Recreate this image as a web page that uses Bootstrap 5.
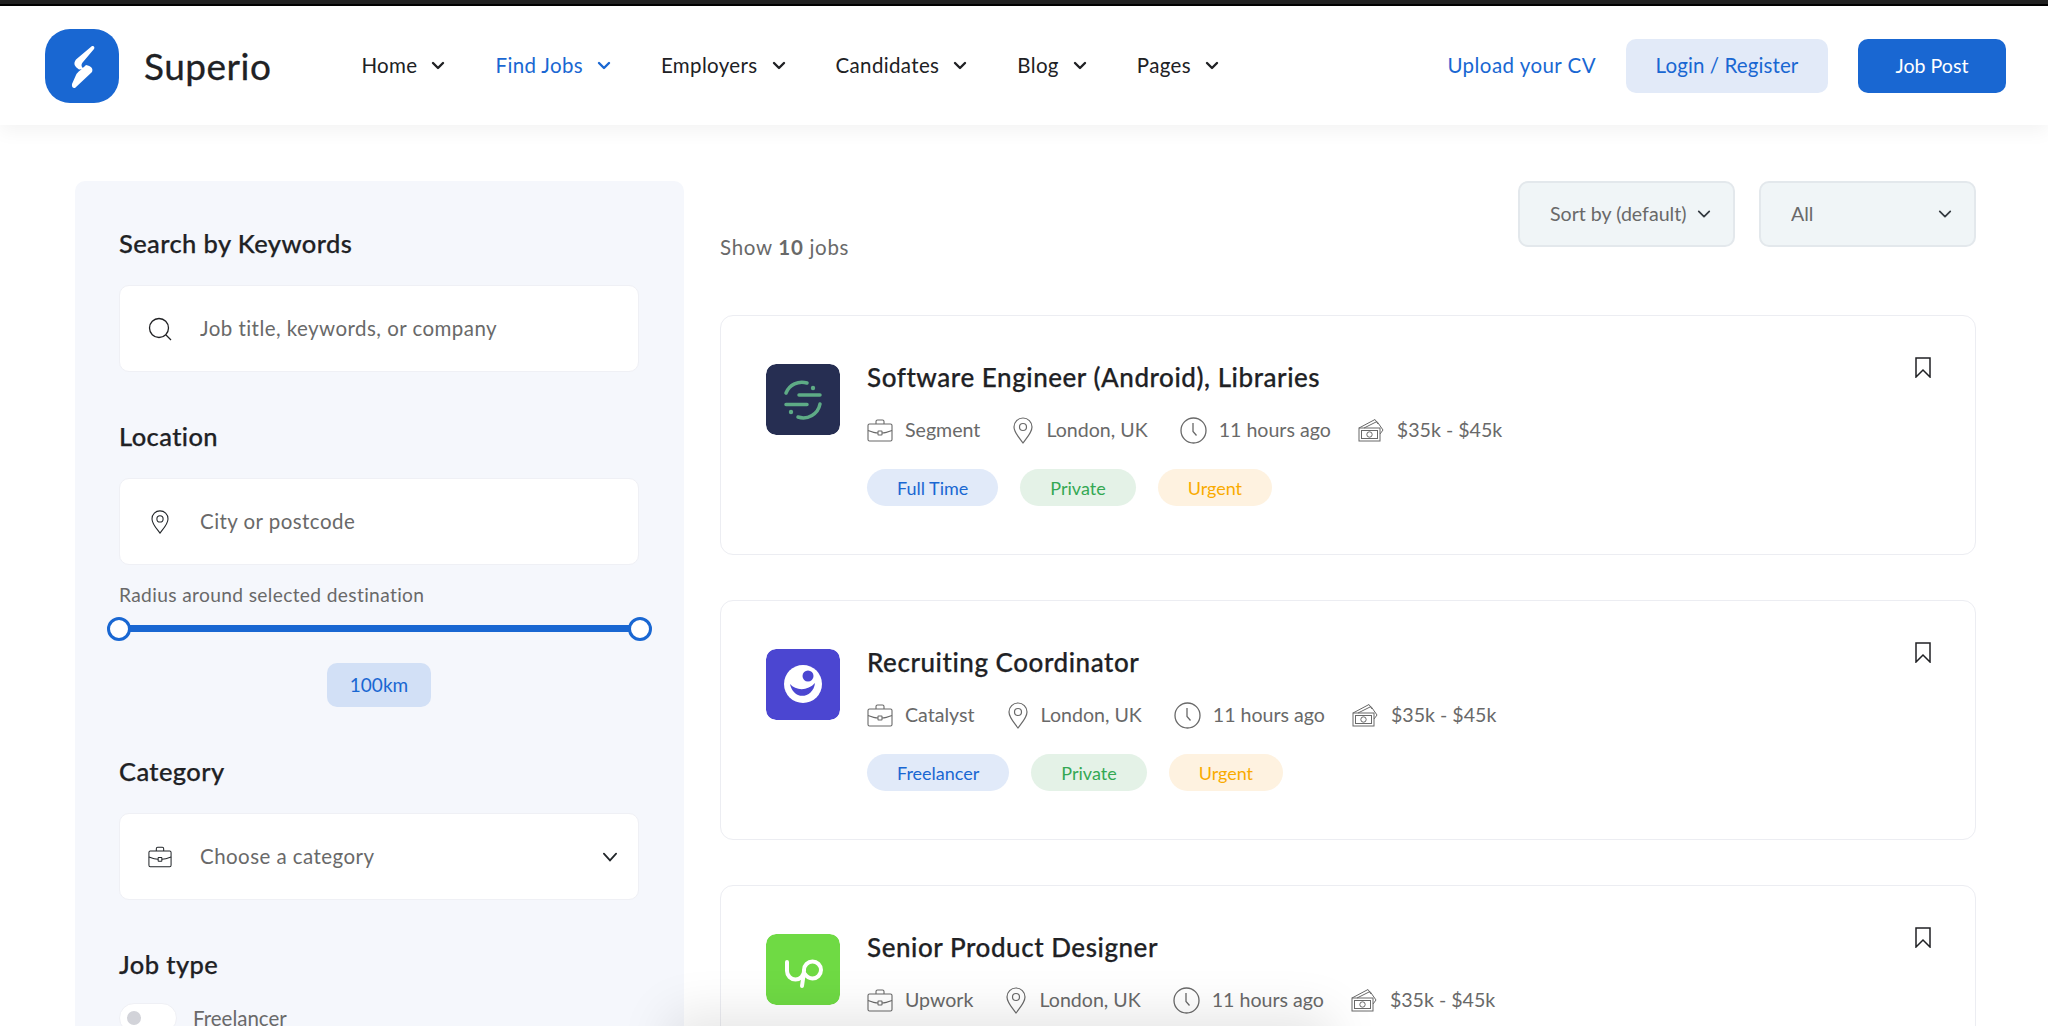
<!DOCTYPE html>
<html lang="en">
    <head>
        <meta charset="UTF-8" />
        <meta name="viewport" content="width=device-width, initial-scale=1" />
        <title>Superio - Find Jobs</title>
        <link href="https://cdn.jsdelivr.net/npm/bootstrap@5.3.0/dist/css/bootstrap.min.css" rel="stylesheet" />
        <style>
            html, body { height: 100%; overflow: hidden; }
            body {
                font-family: "Lato", "Liberation Sans", sans-serif;
                font-size: 19.6px;
                color: #696969;
                background: #fff;
            }
            .top-strip { height: 6px; background: #222; border-bottom: 2px solid #000; }
            .site-header {
                height: 119px;
                padding: 0 42px 0 45px;
                background: #fff;
                box-shadow: 0 6px 18px rgba(0, 0, 0, 0.05);
                position: relative;
                z-index: 2;
            }
            .brand-name { font-size: 37px; color: #202124; margin-left: 25px; line-height: 1; letter-spacing: 0.5px; -webkit-text-stroke: 0.3px #202124; }
            .main-menu { margin-left: 90px; gap: 50px; }
            .main-menu .nav-link { padding: 0; color: #202124; display: flex; align-items: center; gap: 14px; font-size: 20.5px; letter-spacing: 0.35px; }
            .main-menu .nav-link.active-link { color: #1967d2; }
            .upload-link { color: #1967d2; text-decoration: none; margin-right: 30px; font-size: 20.5px; letter-spacing: 0.45px; }
            .btn-soft, .btn-solid { height: 54px; border-radius: 10px; border: 0; display: flex; align-items: center; justify-content: center; }
            .btn-soft { width: 202px; background: #e2eaf8; color: #1967d2; margin-right: 30px; font-size: 20.5px; letter-spacing: 0.1px; }
            .btn-solid { width: 148px; background: #1967d2; color: #fff; font-size: 19.6px; }

            .page-body { padding: 56px 72px 0 75px; gap: 36px; }
            .filter-panel { width: 609px; flex: none; height: 900px; background: #f5f7fc; border-radius: 10px; padding: 44px 45px 0 44px; }
            .filter-title { font-size: 25.5px; letter-spacing: 0.4px; line-height: 36px; color: #202124; margin: 46px 0 24px; -webkit-text-stroke: 0.25px #202124; }
            .filter-title.first-title { margin-top: 0; }
            .filter-box { height: 87px; background: #fff; border: 1px solid #eff0f5; border-radius: 10px; padding: 0 20px 0 28px; }
            .filter-box svg { flex: none; }
            .filter-box .form-control, .filter-box .form-select {
                border: 0; background-color: transparent; box-shadow: none; padding: 0; margin-left: 28px;
                font-size: 20.5px; letter-spacing: 0.45px; color: #696969; background-image: none;
            }
            .filter-box .form-control::placeholder { color: #696969; opacity: 1; }
            .radius-label { font-size: 19.2px; letter-spacing: 0.35px; line-height: 26px; margin-top: 17px; }
            .range-track { height: 7px; background: #1967d2; margin: 17px 0 0; position: relative; }
            .range-thumb { position: absolute; top: -8.5px; width: 24px; height: 24px; background: #fff; border: 3px solid #1967d2; border-radius: 50%; }
            .range-thumb.thumb-left { left: -12px; }
            .range-thumb.thumb-right { right: -13px; }
            .range-value { width: 104px; height: 44px; margin: 31px auto 0; background: #d2e0f6; color: #1967d2; border-radius: 10px; font-size: 19px; }
            .type-row { gap: 16px; }
            .type-row .form-check-input {
                --bs-form-switch-bg: url("data:image/svg+xml,%3csvg xmlns='http://www.w3.org/2000/svg' viewBox='0 0 30 30'%3e%3ccircle cx='15' cy='15' r='7.5' fill='%23d2d3d9'/%3e%3c/svg%3e");
                width: 58px; height: 30px; margin: 0; flex: none;
                border: 1px solid #eff0f5; background-color: #fff;
            }
            .type-row.form-switch { padding-left: 0; min-height: 0; margin: -3px 0 0; font-size: 20.5px; }

            .results-col { flex: 1; min-width: 0; }
            .results-bar { height: 79px; margin-bottom: 55px; }
            .show-count { line-height: 26px; font-size: 20.5px; letter-spacing: 0.7px; }
            .show-count strong { font-weight: 700; }
            .results-bar .form-select {
                width: 217px; height: 66px; padding: 0 22px 0 30px; font-size: 19.6px; color: #696969;
                background-color: #f0f5f7; border: 2px solid #e3e8ec; border-radius: 10px;
                background-position: right 20px center; background-size: 18px 14px;
            }
            .job-card { height: 240px; border: 1px solid #ecedf2; border-radius: 13px; margin-bottom: 45px; padding: 48px 44px 0 45px; flex-direction: row; box-shadow: none; }
            .job-logo { width: 74px; height: 71px; flex: none; border-radius: 10px; }
            .job-info { margin-left: 27px; }
            .job-title { font-size: 26px; letter-spacing: 0.55px; line-height: 30px; color: #202124; margin: -2px 0 23px; -webkit-text-stroke: 0.25px #202124; }
            .job-meta { gap: 32px; line-height: 30px; }
            .job-meta span { display: flex; align-items: center; gap: 12px; }
            .job-meta .meta-money { margin-left: -5px; }
            .job-tags { gap: 22px; margin-top: 24px; }
            .job-tag { height: 37px; padding: 0 30px; border-radius: 19px; font-size: 18px; font-weight: 400; display: flex; align-items: center; }
            .tag-blue { background: #e1eaf9; color: #1967d2; }
            .tag-green { background: #e4f2e7; color: #34a853; }
            .tag-orange { background: #fef2e0; color: #f9ab00; }
            .save-icon { margin: -7px 0 0 auto; flex: none; }
            /* soft shade at the bottom edge of the window */
            .bottom-shade {
                position: fixed; left: 680px; bottom: -40px; width: 640px; height: 40px;
                box-shadow: 0 0 50px 12px rgba(0, 0, 0, 0.1); pointer-events: none; z-index: 3;
            }
        </style>
    </head>
    <body>
        <svg width="0" height="0" class="d-block position-absolute">
            <symbol id="i-case" viewBox="0 0 26 23" fill="none" stroke="currentColor" stroke-width="1.1">
                <rect x="1" y="5" width="24" height="17" rx="1.5" />
                <path d="M1 11.5c5 2 8 2.5 10 2.5M25 11.5c-5 2-8 2.500-10 2.500M9 5V2.500A1.500 1.500 0 0 1 10.500 1h5A1.500 1.500 0 0 1 17 2.500V5" />
                <rect x="11" y="12" width="4" height="4" rx=".5" />
            </symbol>
            <symbol id="i-pin" viewBox="0 0 22 27" fill="none" stroke="currentColor" stroke-width="1.2">
                <path d="M11 26C7 20.500 2 15.500 2 10a9 9 0 0 1 18 0c0 5.500-5 10.500-9 16Z" />
                <circle cx="11" cy="10" r="3.500" />
            </symbol>
            <symbol id="i-clock" viewBox="0 0 27 27" fill="none" stroke="currentColor" stroke-width="1.3">
                <circle cx="13.500" cy="13.500" r="12.500" />
                <path d="M13 6v8.500l3.500 4" />
            </symbol>
            <symbol id="i-money" viewBox="0 0 27 24" fill="none" stroke="currentColor" stroke-width="1">
                <rect x="1" y="10" width="21" height="13" />
                <rect x="3.500" y="12.500" width="16" height="8" />
                <circle cx="11.500" cy="16.500" r="2.700" />
                <path d="M1 10 17 1.500l3 4.500M6 10l13-6.500 6 8.500-3 4" />
            </symbol>
            <symbol id="i-down" viewBox="0 0 14 9" fill="none" stroke="currentColor" stroke-width="2.400" stroke-linecap="round" stroke-linejoin="round">
                <path d="m2 2 5 5 5-5" />
            </symbol>
        </svg>

        <div class="top-strip"></div>
        <header class="site-header navbar flex-nowrap">
            <div class="d-flex align-items-center w-100">
                <a class="d-flex align-items-center text-decoration-none" href="#">
                    <svg width="74" height="74" viewBox="0 0 74 74">
                        <rect width="74" height="74" rx="25" fill="#1967d2" />
                        <path d="M47 17c2-.500 3 1 2 3L38 33c-2.500 3-1.500 5 1 7l-5 .500c-4.500-3-6-6-3-10Z" fill="#fff" />
                        <path d="M41 36c5 1 7.500 3.500 6 7L30 59c-2 .500-3.500-1-3-4l4-9c1.500-3 6-6 10-10Z" fill="#fff" />
                    </svg>
                    <span class="brand-name">Superio</span>
                </a>
                <ul class="nav main-menu flex-nowrap">
                    <li class="nav-item"><a class="nav-link" href="#">Home <svg width="14" height="9"><use href="#i-down" /></svg></a></li>
                    <li class="nav-item"><a class="nav-link active-link" href="#">Find Jobs <svg width="14" height="9"><use href="#i-down" /></svg></a></li>
                    <li class="nav-item"><a class="nav-link" href="#">Employers <svg width="14" height="9"><use href="#i-down" /></svg></a></li>
                    <li class="nav-item"><a class="nav-link" href="#">Candidates <svg width="14" height="9"><use href="#i-down" /></svg></a></li>
                    <li class="nav-item"><a class="nav-link" href="#">Blog <svg width="14" height="9"><use href="#i-down" /></svg></a></li>
                    <li class="nav-item"><a class="nav-link" href="#">Pages <svg width="14" height="9"><use href="#i-down" /></svg></a></li>
                </ul>
                <div class="d-flex align-items-center ms-auto">
                    <a class="upload-link" href="#">Upload your CV</a>
                    <a class="btn btn-soft" href="#">Login / Register</a>
                    <a class="btn btn-solid" href="#">Job Post</a>
                </div>
            </div>
        </header>

        <main class="d-flex align-items-start page-body">
            <aside class="filter-panel">
                <h5 class="filter-title first-title">Search by Keywords</h5>
                <div class="d-flex align-items-center filter-box">
                    <svg width="24" height="24" viewBox="0 0 24 24" fill="none" stroke="#202124" stroke-width="1.300"><circle cx="11" cy="11" r="9.500" /><path d="m18 18 5 5" /></svg>
                    <input class="form-control" type="text" placeholder="Job title, keywords, or company" />
                </div>

                <h5 class="filter-title">Location</h5>
                <div class="d-flex align-items-center filter-box">
                    <svg class="text-dark" width="24" height="24"><use href="#i-pin" /></svg>
                    <input class="form-control" type="text" placeholder="City or postcode" />
                </div>
                <div class="radius-label">Radius around selected destination</div>
                <div class="range-track">
                    <span class="range-thumb thumb-left"></span>
                    <span class="range-thumb thumb-right"></span>
                </div>
                <div class="range-value d-flex align-items-center justify-content-center">100km</div>

                <h5 class="filter-title">Category</h5>
                <div class="d-flex align-items-center filter-box">
                    <svg class="text-dark" width="24" height="22"><use href="#i-case" /></svg>
                    <select class="form-select"><option>Choose a category</option></select>
                    <svg class="text-dark" width="16" height="10" viewBox="0 0 14 9" fill="none" stroke="currentColor" stroke-width="1.600" stroke-linecap="round"><path d="m1.500 1.500 5.500 6 5.500-6" /></svg>
                </div>

                <h5 class="filter-title">Job type</h5>
                <div class="form-check form-switch d-flex align-items-center type-row">
                    <input class="form-check-input" type="checkbox" id="typeFreelancer" />
                    <label class="form-check-label" for="typeFreelancer">Freelancer</label>
                </div>
            </aside>

            <section class="results-col">
                <div class="d-flex justify-content-between results-bar">
                    <div class="show-count align-self-end">Show <strong>10</strong> jobs</div>
                    <div class="d-flex align-items-start gap-4">
                        <select class="form-select"><option>Sort by (default)</option></select>
                        <select class="form-select"><option>All</option></select>
                    </div>
                </div>
                <div id="job-list"></div>
            </section>
        </main>
        <div class="bottom-shade"></div>

        <script>
            const logos = {
                segment: `<svg class="job-logo" viewBox="0 0 74 71"><rect width="74" height="71" rx="10" fill="#262e52"/>
                    <g fill="none" stroke="#5eab86" stroke-width="3.500" stroke-linecap="round"><path d="M33 31h21M20 40.500h21M20 29a17 17 0 0 1 21-10M54 40a17 17 0 0 1-22 13"/></g>
                    <circle cx="47" cy="24" r="2.200" fill="#5eab86"/><circle cx="25" cy="48" r="2.200" fill="#5eab86"/></svg>`,
                catalyst: `<svg class="job-logo" viewBox="0 0 74 71"><rect width="74" height="71" rx="10" fill="#4b46d1"/>
                    <circle cx="37" cy="35" r="19" fill="#fff"/><circle cx="42" cy="27" r="5.500" fill="#4b46d1"/>
                    <path d="M24 35c6 7 18 7 25-1-1 10-10 15-17 12-4-2-7-6-8-11Z" fill="#4b46d1"/></svg>`,
                upwork: `<svg class="job-logo" viewBox="0 0 74 71"><rect width="74" height="71" rx="10" fill="#6fda44"/>
                    <path d="M21 28v9a8.500 8.500 0 0 0 17 0v-1a8.500 8.500 0 1 1 8.500 8.500c-3 0-6-2-8-5M38 38l-2 14" fill="none" stroke="#fff" stroke-width="4" stroke-linecap="round"/></svg>`,
            };

            const jobs = [
                { logo: "segment", title: "Software Engineer (Android), Libraries", company: "Segment", type: "Full Time" },
                { logo: "catalyst", title: "Recruiting Coordinator", company: "Catalyst", type: "Freelancer" },
                { logo: "upwork", title: "Senior Product Designer", company: "Upwork", type: "Full Time" },
            ];

            const list = document.getElementById("job-list");
            jobs.forEach((job) => {
                const card = document.createElement("div");
                card.className = "card job-card";
                card.innerHTML = `
                    ${logos[job.logo]}
                    <div class="job-info">
                        <h4 class="job-title">${job.title}</h4>
                        <div class="d-flex job-meta">
                            <span><svg width="26" height="23"><use href="#i-case"/></svg>${job.company}</span>
                            <span><svg width="22" height="27"><use href="#i-pin"/></svg>London, UK</span>
                            <span><svg width="27" height="27"><use href="#i-clock"/></svg>11 hours ago</span>
                            <span class="meta-money"><svg width="27" height="24"><use href="#i-money"/></svg>$35k - $45k</span>
                        </div>
                        <div class="d-flex job-tags">
                            <span class="badge job-tag tag-blue">${job.type}</span>
                            <span class="badge job-tag tag-green">Private</span>
                            <span class="badge job-tag tag-orange">Urgent</span>
                        </div>
                    </div>
                    <svg class="save-icon" width="16" height="21" viewBox="0 0 16 21" fill="none" stroke="#202124" stroke-width="1.500"><path d="M1 1h14v19l-7-7-7 7Z"/></svg>
                `;
                list.appendChild(card);
            });
        </script>
    </body>
</html>
